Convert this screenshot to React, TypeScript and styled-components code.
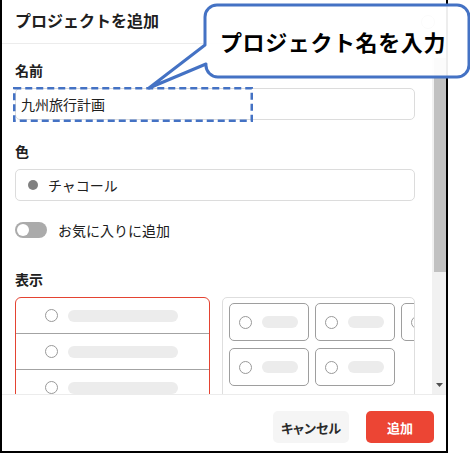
import React from "react";
import styled, { createGlobalStyle } from "styled-components";

const GlobalStyle = createGlobalStyle`
  html, body {
    margin: 0;
    padding: 0;
    background: #fff;
  }
  body {
    font-family: "Noto Sans CJK JP", "Noto Sans", sans-serif;
    color: #202020;
  }
`;

const Frame = styled.div`
  position: relative;
  box-sizing: border-box;
  width: 448px;
  height: 453px;
  border: 2px solid #000;
  border-top: none;
  display: flex;
  flex-direction: column;
  background: #fff;
`;

const Header = styled.div`
  height: 43px;
  flex-shrink: 0;
  border-bottom: 1px solid #ececec;
  display: flex;
  align-items: center;
  justify-content: space-between;
  padding: 0 10px 0 13px;
`;

const Title = styled.h1`
  margin: 0;
  font-size: 16px;
  font-weight: 700;
  line-height: 20px;
  color: #202020;
  margin-top: -3px;
`;

const Body = styled.div`
  flex: 1;
  min-height: 0;
  display: flex;
`;

const Content = styled.div`
  flex: 1;
  overflow: hidden;
  padding: 16px 17px 0 13px;
`;

const ScrollTrack = styled.div`
  width: 14px;
  flex-shrink: 0;
  background: #f1f1f1;
  display: flex;
  flex-direction: column;
`;

const ScrollButton = styled.div`
  height: 14px;
  flex-shrink: 0;
  display: flex;
  align-items: center;
  justify-content: center;
`;

const ScrollThumb = styled.div`
  height: 214px;
  margin: 0 0 0 2px;
  background: #c1c1c1;
`;

const ScrollSpacer = styled.div`
  flex: 1;
`;

const Field = styled.div<{ gap?: number }>`
  margin-bottom: ${(p) => p.gap ?? 21}px;
`;

const Label = styled.div`
  font-size: 14px;
  font-weight: 700;
  line-height: 20px;
  margin-bottom: 8px;
`;

const InputWrap = styled.div`
  position: relative;
`;

const TextBox = styled.div`
  box-sizing: border-box;
  height: 32px;
  border: 1px solid #dcdcdc;
  border-radius: 5px;
  display: flex;
  align-items: center;
  padding: 0 10px 0 5px;
  font-size: 14px;
  gap: 10px;
`;

const ColorDot = styled.span<{ color: string }>`
  width: 10px;
  height: 10px;
  border-radius: 50%;
  background: ${(p) => p.color};
  margin-left: 7px;
`;

const ToggleRow = styled.div`
  display: flex;
  align-items: center;
  gap: 11px;
  height: 20px;
  font-size: 14px;
  margin-bottom: 29px;
`;

const Toggle = styled.span`
  box-sizing: border-box;
  width: 32px;
  height: 16px;
  border-radius: 8px;
  background: #ababab;
  padding: 2px;
  display: flex;
`;

const Knob = styled.span`
  width: 12px;
  height: 12px;
  border-radius: 50%;
  background: #fff;
`;

const Layouts = styled.div`
  display: grid;
  grid-template-columns: 195px 193px;
  gap: 12px;
`;

const ListCard = styled.div`
  border: 1px solid #e44332;
  border-radius: 6px;
  height: 160px;
  overflow: hidden;
`;

const ListRow = styled.div`
  height: 35px;
  border-bottom: 1px solid #a3a3a3;
  display: flex;
  align-items: center;
  gap: 10px;
  padding-left: 29px;
`;

const BoardCard = styled.div`
  border: 1px solid #dedede;
  border-radius: 5px;
  height: 160px;
  overflow: hidden;
  padding: 5px 0 0 6px;
  display: grid;
  grid-template-columns: repeat(3, 80px);
  grid-auto-rows: 38px;
  column-gap: 6px;
  row-gap: 7px;
`;

const BoardItem = styled.div`
  box-sizing: border-box;
  border: 1px solid #9e9e9e;
  border-radius: 5px;
  display: flex;
  align-items: center;
  gap: 10px;
  padding-left: 9px;
`;

const Radio = styled.span`
  box-sizing: border-box;
  width: 13px;
  height: 13px;
  flex-shrink: 0;
  border-radius: 50%;
  border: 1.5px solid #999;
`;

const Pill = styled.span<{ w: number }>`
  width: ${(p) => p.w}px;
  height: 12px;
  flex-shrink: 0;
  border-radius: 6px;
  background: #ececec;
`;

const Footer = styled.div`
  height: 57px;
  flex-shrink: 0;
  border-top: 1px solid #ececec;
  box-sizing: border-box;
  display: flex;
  justify-content: flex-end;
  align-items: flex-start;
  gap: 17px;
  padding: 16px 12px 0 0;
`;

const Button = styled.button<{ primary?: boolean }>`
  height: 32px;
  border: none;
  border-radius: 5px;
  font-family: inherit;
  font-size: 13px;
  font-weight: 700;
  font-feature-settings: "palt";
  padding: 0;
  width: ${(p) => (p.primary ? "68px" : "76px")};
  background: ${(p) => (p.primary ? "#ec4534" : "#f5f5f5")};
  color: ${(p) => (p.primary ? "#fff" : "#2a2a2a")};
`;

const Highlight = styled.svg`
  position: absolute;
  left: -2px;
  top: -1px;
  width: 240px;
  height: 35px;
  pointer-events: none;
`;

const Callout = styled.div`
  position: absolute;
  left: 145px;
  top: 3px;
  width: 325px;
  height: 88px;
  pointer-events: none;
`;

const CalloutShape = styled.svg`
  display: block;
  width: 325px;
  height: 88px;
`;

const CalloutText = styled.div`
  position: absolute;
  left: 58px;
  top: 2px;
  width: 264px;
  height: 72px;
  display: flex;
  align-items: center;
  justify-content: center;
  font-size: 22px;
  font-weight: 700;
  letter-spacing: 0.6px;
  color: #000;
  margin-left: -4px;
`;

const listRows = [0, 1, 2, 3];
const boardItems = [0, 1, 2, 3, 4];

const App = () => {
  return (
    <>
      <GlobalStyle />
      <Frame>
        <Header>
          <Title>プロジェクトを追加</Title>
          <svg width="16" height="16" viewBox="0 0 16 16">
            <circle cx="8" cy="8" r="6.5" fill="none" stroke="#bbb" strokeWidth="1" />
          </svg>
        </Header>
        <Body>
          <Content>
            <Field>
              <Label>名前</Label>
              <InputWrap>
                <TextBox>九州旅行計画</TextBox>
                <Highlight viewBox="0 0 240 35">
                  <rect
                    x="1.25"
                    y="1.25"
                    width="237.5"
                    height="32.5"
                    fill="none"
                    stroke="#4472c4"
                    strokeWidth="2.5"
                    strokeDasharray="7 4"
                  />
                </Highlight>
              </InputWrap>
            </Field>
            <Field gap={19}>
              <Label>色</Label>
              <TextBox>
                <ColorDot color="#808080" />
                チャコール
              </TextBox>
            </Field>
            <ToggleRow>
              <Toggle>
                <Knob />
              </Toggle>
              お気に入りに追加
            </ToggleRow>
            <Label>表示</Label>
            <Layouts>
              <ListCard>
                {listRows.map((r) => (
                  <ListRow key={r}>
                    <Radio />
                    <Pill w={110} />
                  </ListRow>
                ))}
              </ListCard>
              <BoardCard>
                {boardItems.map((b) => (
                  <BoardItem key={b}>
                    <Radio />
                    <Pill w={36} />
                  </BoardItem>
                ))}
              </BoardCard>
            </Layouts>
          </Content>
          <ScrollTrack>
            <ScrollButton>
              <svg width="7" height="4" viewBox="0 0 7 4">
                <path d="M0 4 L3.5 0 L7 4 Z" fill="#505050" />
              </svg>
            </ScrollButton>
            <ScrollThumb />
            <ScrollSpacer />
            <ScrollButton>
              <svg width="7" height="4" viewBox="0 0 7 4" style={{ marginTop: -4 }}>
                <path d="M0 0 L7 0 L3.5 4 Z" fill="#505050" />
              </svg>
            </ScrollButton>
          </ScrollTrack>
        </Body>
        <Footer>
          <Button>キャンセル</Button>
          <Button primary>追加</Button>
        </Footer>
        <Callout>
          <CalloutShape viewBox="0 0 325 88">
            <path
              d="M70 2 H310 A12 12 0 0 1 322 14 V62 A12 12 0 0 1 310 74 H72 A12 12 0 0 1 59 61 L2 85 L58 42 V14 A12 12 0 0 1 70 2 Z"
              fill="rgba(255,255,255,0.93)"
              stroke="#4472c4"
              strokeWidth="3"
              strokeLinejoin="round"
            />
          </CalloutShape>
          <CalloutText>プロジェクト名を入力</CalloutText>
        </Callout>
      </Frame>
    </>
  );
};

export default App;
